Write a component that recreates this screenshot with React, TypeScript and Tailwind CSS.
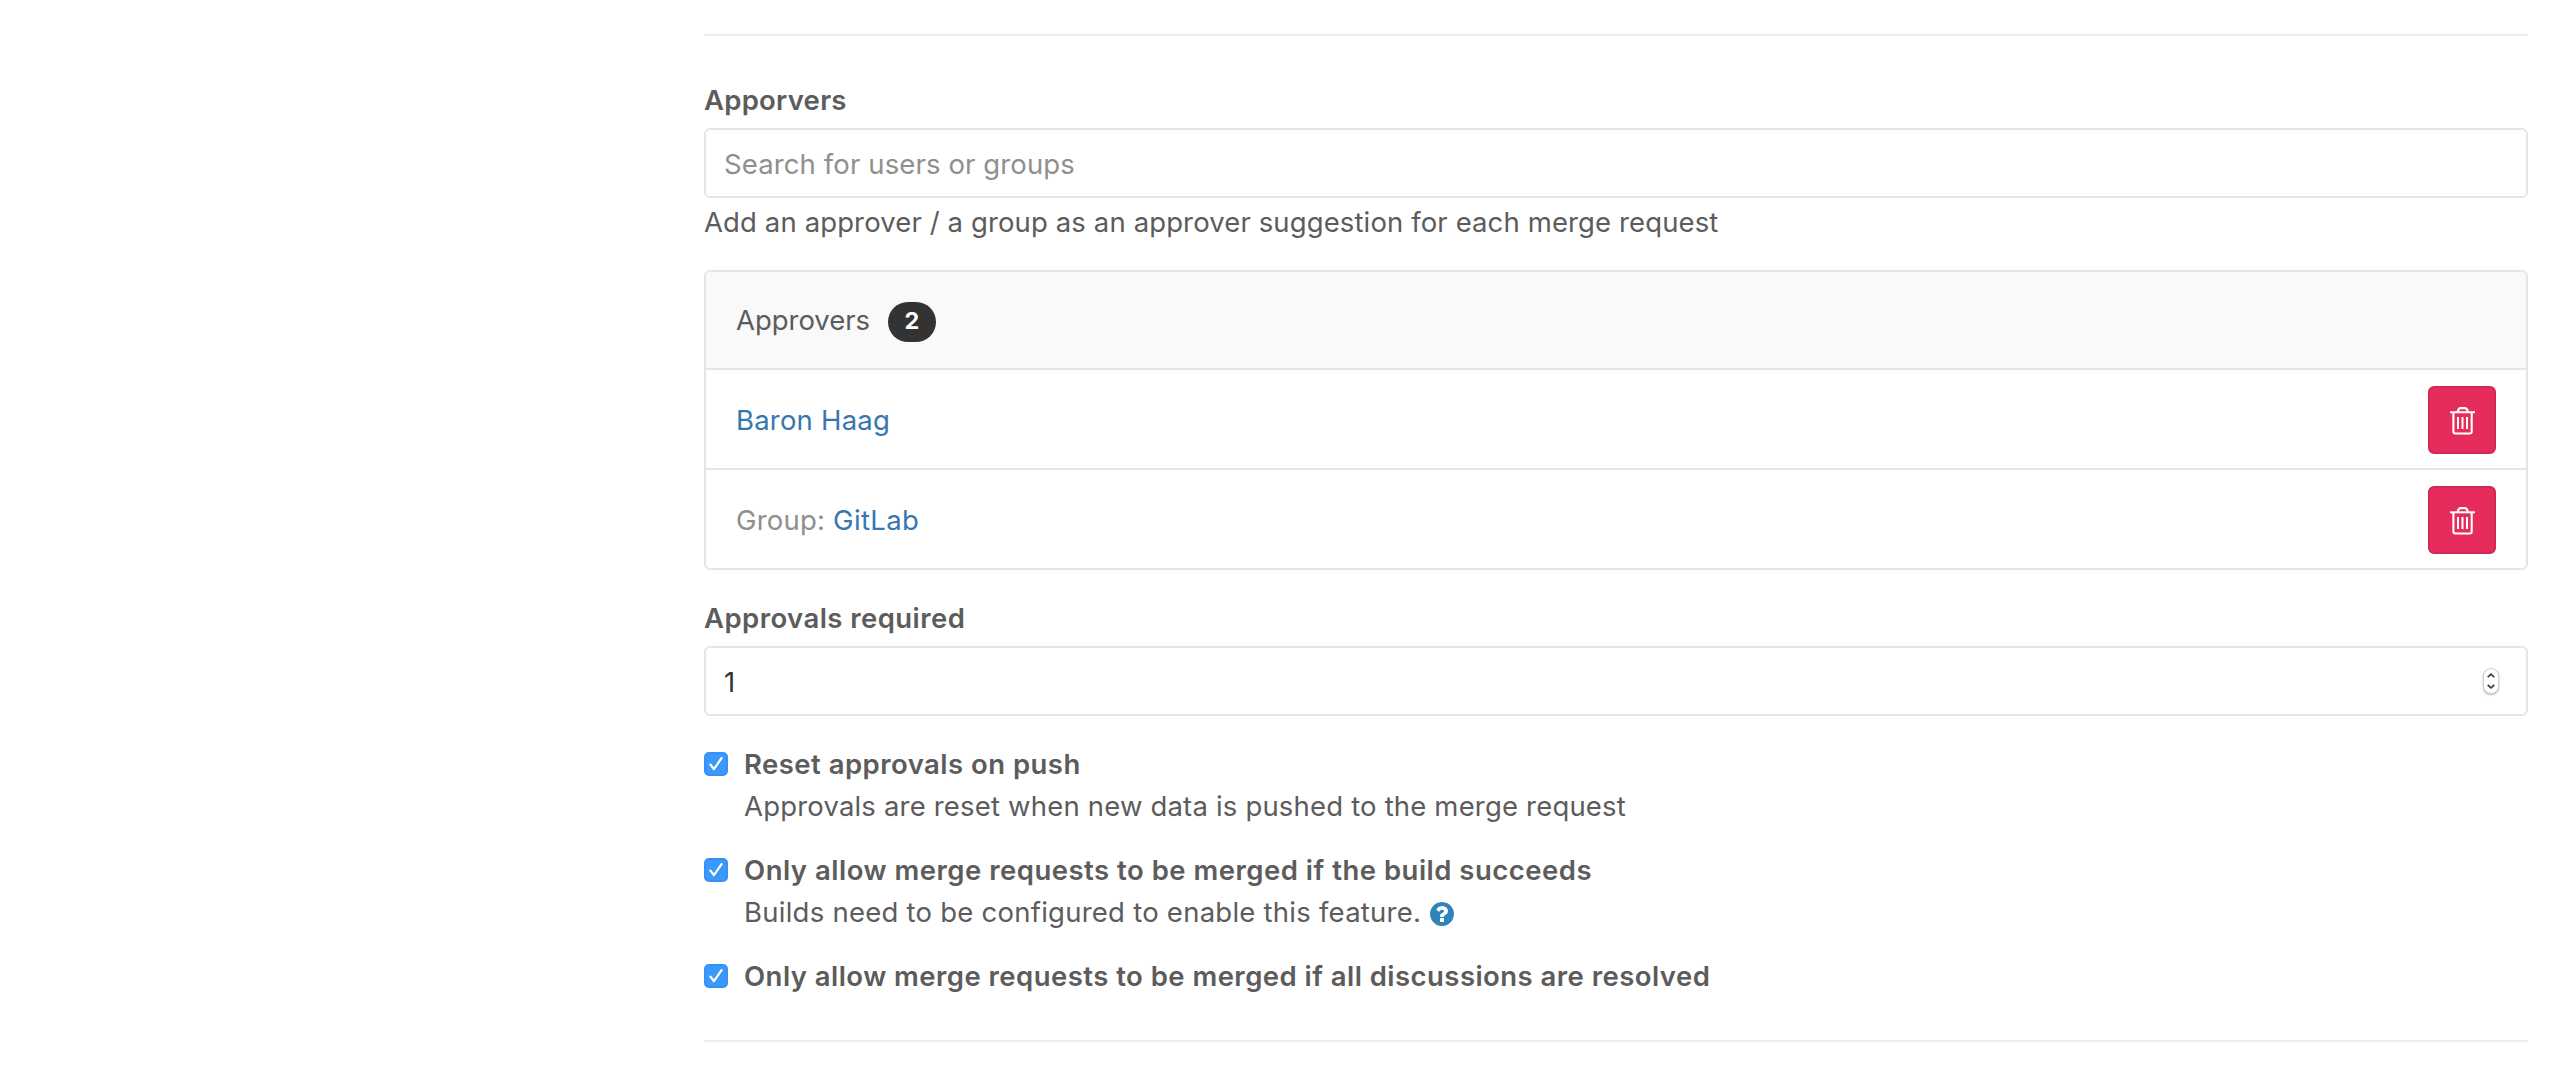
import type { ReactNode } from "react";

function TrashIcon() {
  return (
    <svg width="25" height="28" viewBox="0 0 25 28" fill="none" stroke="#fff" className="mt-0.5 ml-5">
      <path d="M0 5.3H25" strokeWidth="2" />
      <path d="M7.8 5V4.2Q8.6 1.1 10.6 1.1H14.9Q16.9 1.1 17.7 4.2V5" strokeWidth="2.2" />
      <path d="M3.4 5.5V24.6Q3.4 26.5 5.3 26.5H19.8Q21.7 26.5 21.7 24.6V5.5" strokeWidth="2.1" />
      <path d="M8 10V22M12.5 10V22M17 10V22" strokeWidth="2" />
    </svg>
  );
}

function CheckedBox() {
  return (
    <span className="mt-[9px] block h-6 w-6 shrink-0 rounded-[5px] border-2 border-[#3690f6] bg-[#3b99fc]">
      <svg width="20" height="20" viewBox="0 0 20 20" fill="none" strokeLinecap="round" strokeLinejoin="round">
        <path d="M4.6 11.7L8.2 16.4L15.6 5.2" stroke="#2a6fc0" strokeOpacity="0.35" strokeWidth="2.4" />
        <path d="M4.4 10.6L8 15.2L15.6 4.2" stroke="#fff" strokeWidth="2.3" />
      </svg>
    </span>
  );
}

function HelpIcon() {
  return (
    <svg width="24" height="24" viewBox="128 128 1536 1536" fill="#3084bb" className="mt-[11px] ml-[9px]">
      <path d="M1024 1376v-192q0-14-9-23t-23-9h-192q-14 0-23 9t-9 23v192q0 14 9 23t23 9h192q14 0 23-9t9-23zm256-672q0-88-55.5-163t-138.5-116-170-41q-243 0-371 213-15 24 8 42l132 100q7 6 19 6 16 0 25-12 53-68 86-92 34-24 86-24 48 0 85.5 26t37.5 59q0 38-20 61t-68 45q-63 28-115.5 86.5t-52.5 125.5v36q0 14 9 23t23 9h192q14 0 23-9t9-23q0-19 21.5-49.5t54.5-49.5q32-18 49-28.5t46-35 44.5-48 28-60.5 12.5-81zm384 192q0 209-103 385.5t-279.5 279.5-385.5 103-385.5-103-279.5-279.5-103-385.5 103-385.5 279.5-279.5 385.5-103 385.5 103 279.5 279.5 103 385.5z" />
    </svg>
  );
}

function Stepper() {
  return (
    <span className="flex h-[26px] w-4 items-center justify-center rounded-full border border-[#d2d2d2] bg-white shadow-[0_1px_2px_rgba(0,0,0,0.3)]">
      <svg width="8" height="18" viewBox="0 0 8 18" fill="none" stroke="#3c3c3c" strokeWidth="1.7">
        <path d="M0.7 5.2L4 2.2L7.3 5.2" />
        <path d="M0.7 12.8L4 15.8L7.3 12.8" />
      </svg>
    </span>
  );
}

function ApproverRow({ children }: { children: ReactNode }) {
  return (
    <li className="flex h-[100px] items-start justify-between border-t-2 border-[#e5e5e5] px-[30px]">
      <span className="mt-[29px] whitespace-pre">{children}</span>
      <button className="mt-4 block h-[68px] w-[68px] rounded-[6px] border-2 border-[#d22852] bg-[#e52c5a]">
        <TrashIcon />
      </button>
    </li>
  );
}

function Option({ label, children }: { label: ReactNode; children?: ReactNode }) {
  return (
    <div className="flex">
      <CheckedBox />
      <div className="ml-4">
        <div className="font-semibold whitespace-nowrap">{label}</div>
        {children}
      </div>
    </div>
  );
}

export default function App() {
  return (
    <main className="h-[1078px] w-[2560px] overflow-hidden bg-white pt-[34px] pr-8 pl-[704px] font-['Inter',sans-serif] text-[27.5px] leading-[42px] text-[#5c5c5c]">
      <hr className="border-t-2 border-[#eeeeee]" />

      <div className="mt-[43px] font-semibold tracking-[0.26px]">Apporvers</div>
      <div className="mt-[7px] h-[70px] rounded-[6px] border-2 border-[#e5e5e5] pt-[13px] pl-[18px] tracking-[0.12px] text-[#8f8f8f]">
        Search for users or groups
      </div>
      <p className="mt-[3px] tracking-[0.119px]">
        Add an approver / a group as an approver suggestion for each merge request
      </p>

      <section className="mt-[27px] overflow-hidden rounded-[6px] border-2 border-[#e5e5e5]">
        <header className="flex h-24 items-center bg-[#f9f9f9] pl-[30px]">
          <span className="w-[152px] tracking-[-0.04px]">Approvers</span>
          <span className="mt-1 flex h-10 w-12 items-center justify-center rounded-[20px] bg-[#333333] pb-0.5 text-[23.5px] leading-[38px] font-bold text-white">
            2
          </span>
        </header>
        <ul>
          <ApproverRow>
            <a className="tracking-[0.2px] text-[#3777b0]">Baron Haag</a>
          </ApproverRow>
          <ApproverRow>
            <span className="tracking-[0.2px] text-[#8f8f8f]">Group: </span>
            <a className="tracking-[0.35px] text-[#3777b0]">GitLab</a>
          </ApproverRow>
        </ul>
      </section>

      <div className="mt-[27px] font-semibold tracking-[0.44px]">Approvals required</div>
      <div className="mt-[7px] flex h-[70px] items-center justify-between rounded-[6px] border-2 border-[#e5e5e5] pr-[27px] pl-[18px] text-[#333333]">
        <span className="mt-0.5">1</span>
        <Stepper />
      </div>

      <div className="mt-[27px] flex flex-col gap-[22px]">
        <Option label={<span className="tracking-[0.47px]">Reset approvals on push</span>}>
          <p className="tracking-[0.179px]">
            Approvals are reset when new data is pushed to the merge request
          </p>
        </Option>
        <Option
          label={
            <span className="tracking-[0.495px]">
              Only allow merge requests to be merged if the build succeeds
            </span>
          }
        >
          <div className="flex h-[42px]">
            <p className="tracking-[0.247px]">Builds need to be configured to enable this feature.</p>
            <HelpIcon />
          </div>
        </Option>
        <Option
          label={
            <span className="tracking-[0.461px]">
              Only allow merge requests to be merged if all discussions are resolved
            </span>
          }
        />
      </div>

      <hr className="mt-[43px] border-t-2 border-[#eeeeee]" />
    </main>
  );
}
